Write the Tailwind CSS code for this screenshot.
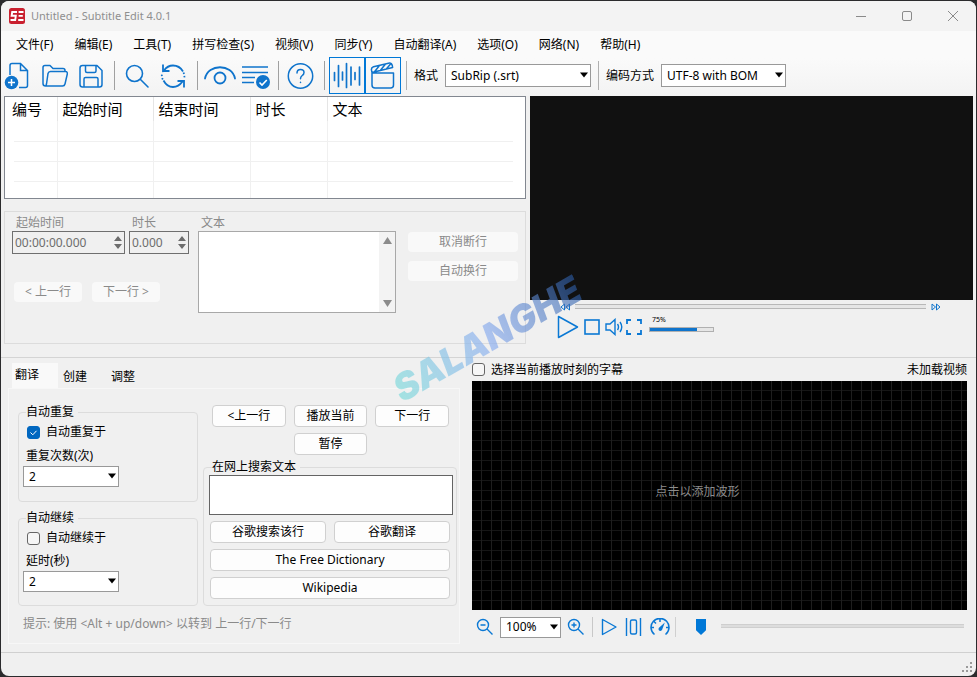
<!DOCTYPE html>
<html lang="zh-CN">
<head>
  <meta charset="UTF-8" />
  <meta name="viewport" content="width=device-width, initial-scale=1.0" />
  <title>Untitled - Subtitle Edit 4.0.1</title>
  <script src="https://cdn.jsdelivr.net/npm/@tailwindcss/browser@4"></script>
</head>
<body class="bg-[#2b2b2d] font-['Noto_Sans','Noto_Sans_CJK_SC',sans-serif] text-xs leading-4 text-black">
  <div class="min-h-screen p-px flex flex-col">
    <div class="relative flex-1 flex flex-col bg-[#f0f0f0] rounded-lg overflow-hidden">

      <!-- Title bar -->
      <header class="h-[30px] flex items-center bg-[#f3f3f3] pl-2 pb-px text-[#8f8f8f]">
        <svg class="w-4 h-4" viewBox="0 0 16 16" fill="none" stroke="#fff" stroke-width="1.9">
          <rect width="16" height="16" rx="2.5" fill="#c9202f" stroke="none" />
          <path d="M8 4H3.200L2.600 7.800H6.800L6.200 12H1.500M14.500 4H9.600M13.800 7.900H9.600M14.500 12H9.200" />
        </svg>
        <h1 class="ml-1.5 text-[11px]">Untitled - Subtitle Edit 4.0.1</h1>
        <div class="ml-auto flex">
          <button class="w-[46px] h-7 flex items-center justify-center" aria-label="最小化">
            <svg class="w-3 h-3" viewBox="0 0 12 12" fill="none" stroke="#8a8a8a"><path d="M1 6.5h10" /></svg>
          </button>
          <button class="w-[46px] h-7 flex items-center justify-center" aria-label="最大化">
            <svg class="w-3 h-3" viewBox="0 0 12 12" fill="none" stroke="#8a8a8a"><rect x="1.5" y="1.5" width="9" height="9" rx="1.5" /></svg>
          </button>
          <button class="w-[46px] h-7 flex items-center justify-center" aria-label="关闭">
            <svg class="w-3 h-3" viewBox="0 0 12 12" fill="none" stroke="#8a8a8a"><path d="M1 1l10 10M11 1L1 11" /></svg>
          </button>
        </div>
      </header>

      <!-- Menu -->
      <nav class="h-[27px] flex items-center gap-px bg-[#fafafa] pl-[5px]">
        <button class="px-[10px]">文件(F)</button>
        <button class="px-[10px]">编辑(E)</button>
        <button class="px-[10px]">工具(T)</button>
        <button class="px-[10px]">拼写检查(S)</button>
        <button class="px-[10px]">视频(V)</button>
        <button class="px-[10px]">同步(Y)</button>
        <button class="px-[10px]">自动翻译(A)</button>
        <button class="px-[10px]">选项(O)</button>
        <button class="px-[10px]">网络(N)</button>
        <button class="px-[10px]">帮助(H)</button>
      </nav>

      <!-- Toolbar -->
      <div class="h-[38px] flex items-center pb-[3px] bg-linear-to-b from-[#fafafa] to-[#f3f3f3]">
        <button class="w-9 h-9 flex items-center justify-center" aria-label="新建">
          <svg class="w-8 h-8" viewBox="0 0 32 32" fill="none" stroke="#0f74cc" stroke-width="1.5">
            <path d="M7 15V5.500Q7 3.500 9 3.500H17.500L24.500 10.500V25.500Q24.500 27.500 22.500 27.500H16M17.500 3.500V10.500H24.500" />
            <circle cx="8.500" cy="22.500" r="6.800" fill="#0f74cc" stroke="none" />
            <path d="M8.500 19v7M5 22.500h7" stroke="#fff" />
          </svg>
        </button>
        <button class="w-9 h-9 flex items-center justify-center" aria-label="打开">
          <svg class="w-7 h-7" viewBox="0 0 28 28" fill="none" stroke="#0f74cc" stroke-width="1.5" stroke-linejoin="round">
            <path d="M4.500 24Q2 24 2 21.500V5.500Q2 3.500 4 3.500H9L12 6.500H22Q24 6.500 24 8.500V9.500M4.500 24H21.500Q23.500 24 24 22L26.300 12Q26.600 9.500 24.500 9.500H9.500Q7.500 9.500 7 11.500L5.500 22Q5 24 4.500 24Z" />
          </svg>
        </button>
        <button class="w-9 h-9 flex items-center justify-center" aria-label="保存">
          <svg class="w-7 h-7" viewBox="0 0 28 28" fill="none" stroke="#0f74cc" stroke-width="1.5" stroke-linejoin="round">
            <path d="M5.500 3.500H20L25 8.500V22.500Q25 25 22.500 25H5.500Q3 25 3 22.500V6Q3 3.500 5.500 3.500ZM8.500 3.500V9Q8.500 10.500 10 10.500H17.500Q19 10.500 19 9V3.500M7 25V17Q7 15.500 8.500 15.500H19.500Q21 15.500 21 17V25" />
          </svg>
        </button>
        <span class="w-px h-[29px] bg-[#a0a0a0] mx-[5px]"></span>
        <button class="w-9 h-9 flex items-center justify-center" aria-label="查找">
          <svg class="w-7 h-7" viewBox="0 0 28 28" fill="none" stroke="#0f74cc" stroke-width="1.6" stroke-linecap="round">
            <circle cx="10.500" cy="11.500" r="8" /><path d="M16.500 17.500L24 25" />
          </svg>
        </button>
        <button class="w-9 h-9 flex items-center justify-center" aria-label="替换">
          <svg class="w-7 h-7" viewBox="0 0 28 28" fill="none" stroke="#0f74cc" stroke-width="1.8">
            <path d="M4 8.500Q7.500 3.500 13 3.500Q19.500 3.500 23 9.500M22.500 19.500Q18.500 25 13 25Q7 25 3.500 18.500" />
            <path d="M3 2.500V9H9.500M24 25.500V19H17.500" />
            <path d="M23.500 10.500Q25 14 24 17M2.800 17.500Q1 14 2.500 10.500" stroke-dasharray="1.500 2" />
          </svg>
        </button>
        <span class="w-px h-[29px] bg-[#a0a0a0] ml-[5px] mr-1"></span>
        <button class="w-9 h-9 flex items-center justify-center" aria-label="可视同步">
          <svg class="w-8 h-7" viewBox="0 0 32 28" fill="none" stroke="#0f74cc" stroke-width="1.8" stroke-linecap="round">
            <path d="M1 16.500C4 1.500 28 1.500 31 16.500" /><circle cx="16" cy="16" r="5.500" />
          </svg>
        </button>
        <button class="w-9 h-9 flex items-center justify-center" aria-label="拼写检查">
          <svg class="w-7 h-7" viewBox="0 0 28 28" fill="none" stroke="#0f74cc" stroke-width="1.6">
            <path d="M0 5H26M0 10.500H26M0 15.500H13M0 20.500H12" />
            <circle cx="21" cy="20" r="7" fill="#0f74cc" stroke="none" />
            <path d="M17.500 20.500l2.500 2.500 4.800-5" stroke="#fff" />
          </svg>
        </button>
        <span class="w-px h-[29px] bg-[#a0a0a0] mx-1"></span>
        <button class="w-9 h-9 flex items-center justify-center" aria-label="帮助">
          <svg class="w-7 h-7" viewBox="0 0 28 28" fill="none" stroke="#0f74cc" stroke-width="1.5" stroke-linecap="round">
            <circle cx="13.500" cy="14" r="12.200" />
            <path d="M10 11Q10 7.500 13.500 7.500Q17 7.500 17 10.500Q17 12.300 15.200 13.500Q13.500 14.800 13.500 16.800M13.500 20.300v.2" />
          </svg>
        </button>
        <span class="w-px h-[29px] bg-[#a0a0a0] ml-[5px] mr-1"></span>
        <button class="w-9 h-[37px] border border-[#0078d7] flex items-center justify-center" aria-label="显示波形" aria-pressed="true">
          <svg class="w-7 h-7" viewBox="0 0 28 28" fill="none" stroke="#0f74cc" stroke-width="1.7" stroke-linecap="round">
            <path d="M1.500 10.500v8M5.500 3.500v21M9.500 10v8M13.500 1.500v24M18 5v18M22 10.500v7M26.500 5v18" />
          </svg>
        </button>
        <button class="w-9 h-[37px] border border-[#0078d7] flex items-center justify-center" aria-label="显示视频" aria-pressed="true">
          <svg class="w-7 h-7" viewBox="0 0 28 28" fill="none" stroke="#0f74cc" stroke-width="1.5" stroke-linejoin="round">
            <path d="M3 11H24.500V23Q24.500 26 21.500 26H6Q3 26 3 23ZM2.500 8.200Q2 5.500 4.500 4.800L19.500 1.200Q22.500.6 23.300 3.500L23.600 5.400L3 10.500ZM5.500 9.800L10.500 3.500M11.500 8.300L16.500 2M17.500 6.800L22 1.500" />
          </svg>
        </button>
        <span class="w-px h-[29px] bg-[#b0b0b0] mx-[5px]"></span>
        <label for="format" class="ml-0.5 whitespace-nowrap">格式</label>
        <div class="relative ml-[7px] w-[146px]">
          <select id="format" class="appearance-none block w-full h-[23px] bg-white border border-[#999] pl-[5px] pr-4"><option>SubRip (.srt)</option></select>
          <svg class="absolute right-[3px] top-2 w-2 h-[6px] pointer-events-none" viewBox="0 0 8 6"><path d="M0 .5H8L4 5.500Z" /></svg>
        </div>
        <span class="w-px h-[29px] bg-[#b0b0b0] mx-[7px]"></span>
        <label for="encoding" class="whitespace-nowrap">编码方式</label>
        <div class="relative ml-[7px] w-[125px]">
          <select id="encoding" class="appearance-none block w-full h-[23px] bg-white border border-[#999] pl-[5px] pr-4"><option>UTF-8 with BOM</option></select>
          <svg class="absolute right-[3px] top-2 w-2 h-[6px] pointer-events-none" viewBox="0 0 8 6"><path d="M0 .5H8L4 5.500Z" /></svg>
        </div>
      </div>

      <!-- Subtitle list + video -->
      <section class="grid grid-cols-[522fr_443fr] gap-1 px-[3px] pb-[13px] border-b border-[#d4d4d4]">
        <div class="min-w-0">
          <div class="h-[103px] bg-white border border-[#828790] pl-[9px] pr-3 overflow-hidden">
            <table class="w-full table-fixed border-collapse text-[15px] leading-5">
              <colgroup>
                <col class="w-[43px]" /><col class="w-[96px]" /><col class="w-[97px]" /><col class="w-[77px]" /><col />
              </colgroup>
              <thead>
                <tr class="h-6 text-left">
                  <th class="font-normal p-0 border-r border-[#e5e5e5] whitespace-nowrap"><span class="relative -left-0.5">编号</span></th>
                  <th class="font-normal p-0 pl-[5px] border-r border-[#e5e5e5]">起始时间</th>
                  <th class="font-normal p-0 pl-[5px] border-r border-[#e5e5e5]">结束时间</th>
                  <th class="font-normal p-0 pl-[5px] border-r border-[#e5e5e5]">时长</th>
                  <th class="font-normal p-0 pl-[5px]">文本</th>
                </tr>
              </thead>
              <tbody class="[&_td]:border-r [&_td]:border-b [&_td]:border-[#f0f0f0] [&_td:last-child]:border-r-0">
                <tr class="h-5"><td></td><td></td><td></td><td></td><td></td></tr>
                <tr class="h-5"><td></td><td></td><td></td><td></td><td></td></tr>
                <tr class="h-5"><td></td><td></td><td></td><td></td><td></td></tr>
                <tr class="h-5"><td></td><td></td><td></td><td></td><td></td></tr>
              </tbody>
            </table>
          </div>

          <!-- Line editor -->
          <div class="mt-3 h-[133px] border border-[#dcdcdc] px-[7px] pt-[3px] flex text-[#8a8a8a]">
            <div>
              <div class="flex gap-1">
                <div>
                  <label for="start" class="block pl-1">起始时间</label>
                  <div class="relative w-[113px]">
                    <input id="start" type="text" value="00:00:00.000" disabled class="block w-full h-[23px] border border-[#6f6f6f] pl-0.5 text-[#6d6d6d]" />
                    <svg class="absolute right-[3px] top-[5px] w-2 h-[13px]" viewBox="0 0 8 13" fill="#6d6d6d"><path d="M0 5L4 0L8 5ZM0 8H8L4 13Z" /></svg>
                  </div>
                </div>
                <div>
                  <label for="duration" class="block pl-[3px]">时长</label>
                  <div class="relative w-[60px]">
                    <input id="duration" type="text" value="0.000" disabled class="block w-full h-[23px] border border-[#6f6f6f] pl-0.5 text-[#6d6d6d]" />
                    <svg class="absolute right-[3px] top-[5px] w-2 h-[13px]" viewBox="0 0 8 13" fill="#6d6d6d"><path d="M0 5L4 0L8 5ZM0 8H8L4 13Z" /></svg>
                  </div>
                </div>
              </div>
              <div class="mt-7 ml-0.5 flex gap-[10px]">
                <button disabled class="w-[68px] h-5 bg-[#f9f9f9] rounded">&lt; 上一行</button>
                <button disabled class="w-[68px] h-5 bg-[#f9f9f9] rounded">下一行 &gt;</button>
              </div>
            </div>
            <div class="ml-[9px] flex-1 min-w-0">
              <label for="text" class="block pl-[3px]">文本</label>
              <div class="flex h-[82px] bg-white border border-[#a8a8a8]">
                <textarea id="text" disabled class="flex-1 min-w-0 resize-none"></textarea>
                <div class="w-4 bg-[#f3f3f3] flex flex-col items-center justify-between py-[5px]">
                  <svg class="w-[9px] h-[7px]" viewBox="0 0 9 7" fill="#8b8b8b"><path d="M0 7L4.500 0L9 7Z" /></svg>
                  <svg class="w-[9px] h-[7px]" viewBox="0 0 9 7" fill="#8b8b8b"><path d="M0 0H9L4.500 7Z" /></svg>
                </div>
              </div>
            </div>
            <div class="ml-3 pt-[17px] w-[110px] flex flex-col gap-[9px]">
              <button disabled class="h-5 bg-[#f9f9f9] rounded">取消断行</button>
              <button disabled class="h-5 bg-[#f9f9f9] rounded">自动换行</button>
            </div>
          </div>
        </div>

        <div class="min-w-0">
          <div class="h-[204px] bg-[#111]"></div>
          <div class="h-[13px] flex items-center pl-[30px] pr-[32px]">
            <svg class="w-[10px] h-2" viewBox="0 0 10 8" fill="none" stroke="#0f74cc"><path d="M4.500 1V7L1 4ZM9.500 1V7L6 4Z" /></svg>
            <input type="range" value="0" aria-label="播放位置" class="appearance-none flex-1 min-w-0 mx-[5px] h-[5px] bg-[#e6e6e6] border-y border-[#b8b8b8] [&::-webkit-slider-thumb]:appearance-none [&::-webkit-slider-thumb]:w-0" />
            <svg class="w-[10px] h-2" viewBox="0 0 10 8" fill="none" stroke="#0f74cc"><path d="M1 1V7L4.500 4ZM5.500 1V7L9 4Z" /></svg>
          </div>
          <div class="h-7 flex items-center pl-[27px]">
            <button aria-label="播放">
              <svg class="w-[22px] h-6 block" viewBox="0 0 22 24" fill="none" stroke="#0a78d4" stroke-width="1.5" stroke-linejoin="round"><path d="M1.500 1.500L20.500 12L1.500 22.500Z" /></svg>
            </button>
            <button aria-label="停止" class="ml-[5px]">
              <svg class="w-4 h-4 block" viewBox="0 0 16 16" fill="none" stroke="#0a78d4" stroke-width="1.6"><rect x="1" y="1" width="14" height="14" /></svg>
            </button>
            <button aria-label="静音" class="ml-[5px]">
              <svg class="w-[18px] h-[18px] block" viewBox="0 0 18 18" fill="none" stroke="#0a78d4" stroke-width="1.4"><path d="M1 6H5L10 1.500V16.500L5 12H1ZM12.500 6Q14.500 9 12.500 12M15 4Q18.500 9 15 14" /></svg>
            </button>
            <button aria-label="全屏" class="ml-[3px]">
              <svg class="w-4 h-4 block" viewBox="0 0 16 16" fill="none" stroke="#0a78d4" stroke-width="1.8"><path d="M1 5V1H5M11 1H15V5M15 11V15H11M5 15H1V11" /></svg>
            </button>
            <div class="ml-[7px] w-[65px] h-[22px]">
              <label for="volume" class="block pl-[3px] text-[7px] leading-[8px]">75%</label>
              <input id="volume" type="range" value="75" class="appearance-none block w-full h-[5px] mt-[3px] border border-[#b0b0b0] bg-linear-to-r from-[#0f74cc] from-75% to-[#e6e6e6] to-75% [&::-webkit-slider-thumb]:appearance-none [&::-webkit-slider-thumb]:w-0" />
            </div>
          </div>
        </div>
      </section>

      <!-- Translate tabs + waveform -->
      <section class="flex-1 grid grid-cols-[468fr_495fr] pl-[3px] pr-[9px]">
        <div class="min-w-0 pt-[5px] flex flex-col">
          <div class="flex pl-2 h-[25px]" role="tablist">
            <button role="tab" aria-selected="true" class="w-[46px] bg-[#f9f9f9] pl-[3px] pb-px text-left">翻译</button>
            <button role="tab" class="w-12 pl-[5px] pt-[3px] text-left">创建</button>
            <button role="tab" class="w-12 pl-[5px] pt-[3px] text-left">调整</button>
          </div>
          <div class="flex-1 ml-1 mr-3 border border-[#f7f7f7] pl-[9px] pr-[2px] pt-[15px]">
            <div class="flex gap-[5px]">
              <div class="w-[180px] flex flex-col gap-2">
                <fieldset class="h-[98px] border border-[#dcdcdc] rounded-sm pl-1">
                  <legend class="ml-[3px] pr-1">自动重复</legend>
                  <label class="flex items-center gap-1.5 ml-1 mt-1">
                    <span class="relative w-[13px] h-[13px]">
                      <input type="checkbox" checked class="appearance-none block w-[13px] h-[13px] rounded-[3px] border border-[#666] bg-white checked:bg-[#0067c0] checked:border-[#0067c0]" />
                      <svg class="absolute inset-0 pointer-events-none" viewBox="0 0 13 13" fill="none" stroke="#fff"><path d="M3.500 6.500L5.800 8.800L9.500 4.800" /></svg>
                    </span>
                    自动重复于
                  </label>
                  <label for="repeat" class="block mt-2 ml-[3px]">重复次数(次)</label>
                  <div class="relative w-24 mt-0.5">
                    <select id="repeat" class="appearance-none block w-full h-[21px] bg-white border border-[#999] pl-[5px]"><option>2</option></select>
                    <svg class="absolute right-[3px] top-[7px] w-2 h-[6px] pointer-events-none" viewBox="0 0 8 6"><path d="M0 .5H8L4 5.500Z" /></svg>
                  </div>
                </fieldset>
                <fieldset class="h-[96px] border border-[#dcdcdc] rounded-sm pl-1">
                  <legend class="ml-[3px] pr-1">自动继续</legend>
                  <label class="flex items-center gap-1.5 ml-1 mt-1">
                    <input type="checkbox" class="appearance-none w-[13px] h-[13px] rounded-[3px] border border-[#666] bg-[#f6f6f6]" />
                    自动继续于
                  </label>
                  <label for="delay" class="block mt-[7px] ml-[3px]">延时(秒)</label>
                  <div class="relative w-24 mt-0.5">
                    <select id="delay" class="appearance-none block w-full h-[21px] bg-white border border-[#999] pl-[5px]"><option>2</option></select>
                    <svg class="absolute right-[3px] top-[7px] w-2 h-[6px] pointer-events-none" viewBox="0 0 8 6"><path d="M0 .5H8L4 5.500Z" /></svg>
                  </div>
                </fieldset>
              </div>
              <div class="flex-1 min-w-0 pt-px">
                <div class="grid grid-cols-3 gap-x-2 gap-y-[6px] pl-[9px] pr-[8px]">
                  <button class="h-[22px] bg-[#fdfdfd] border border-[#d0d0d0] rounded">&lt;上一行</button>
                  <button class="h-[22px] bg-[#fdfdfd] border border-[#d0d0d0] rounded">播放当前</button>
                  <button class="h-[22px] bg-[#fdfdfd] border border-[#d0d0d0] rounded">下一行</button>
                  <button class="h-[22px] bg-[#fdfdfd] border border-[#d0d0d0] rounded col-start-2">暂停</button>
                </div>
                <fieldset class="mt-1 h-[147px] border border-[#dcdcdc] rounded-sm px-1">
                  <legend class="ml-1 pr-1"><label for="search">在网上搜索文本</label></legend>
                  <textarea id="search" class="block ml-px w-full h-10 bg-white border border-[#646464] resize-none"></textarea>
                  <div class="grid grid-cols-2 gap-x-2 gap-y-[6px] mt-[6px] px-0.5">
                    <button class="h-[22px] bg-[#fdfdfd] border border-[#d0d0d0] rounded">谷歌搜索该行</button>
                    <button class="h-[22px] bg-[#fdfdfd] border border-[#d0d0d0] rounded">谷歌翻译</button>
                    <button class="h-[22px] bg-[#fdfdfd] border border-[#d0d0d0] rounded col-span-2">The Free Dictionary</button>
                    <button class="h-[22px] bg-[#fdfdfd] border border-[#d0d0d0] rounded col-span-2">Wikipedia</button>
                  </div>
                </fieldset>
              </div>
            </div>
            <p class="mt-[10px] ml-[5px] text-[#8a8a8a]">提示: 使用 &lt;Alt + up/down&gt; 以转到 上一行/下一行</p>
          </div>
        </div>

        <div class="min-w-0 flex flex-col">
          <div class="h-[23px] flex items-center justify-between">
            <label class="flex items-center gap-1.5">
              <input type="checkbox" class="appearance-none w-[13px] h-[13px] rounded-[3px] border border-[#666] bg-[#f6f6f6]" />
              选择当前播放时刻的字幕
            </label>
            <span>未加载视频</span>
          </div>
          <div class="h-[229px] flex items-center justify-center pr-11 pb-2 text-[#8c8c8c] bg-black bg-[linear-gradient(to_left,#1e1e1e_1px,transparent_1px),linear-gradient(to_top,#161616_1px,transparent_1px)] bg-[size:10px_10px]">点击以添加波形</div>
          <div class="h-[34px] flex items-center pl-1">
            <button aria-label="缩小">
              <svg class="w-[18px] h-[18px] block" viewBox="0 0 18 18" fill="none" stroke="#0a78d4" stroke-width="1.4"><circle cx="7" cy="7" r="5.500" /><path d="M11 11L16.500 16.500M4.500 7H9.500" /></svg>
            </button>
            <div class="relative ml-1.5 w-[61px]">
              <select aria-label="缩放" class="appearance-none block w-full h-[21px] bg-white border border-[#999] pl-[5px]"><option>100%</option></select>
              <svg class="absolute right-[3px] top-[7px] w-2 h-[6px] pointer-events-none" viewBox="0 0 8 6"><path d="M0 .5H8L4 5.500Z" /></svg>
            </div>
            <button aria-label="放大" class="ml-1.5">
              <svg class="w-[18px] h-[18px] block" viewBox="0 0 18 18" fill="none" stroke="#0a78d4" stroke-width="1.4"><circle cx="7" cy="7" r="5.500" /><path d="M11 11L16.500 16.500M4.500 7H9.500M7 4.500V9.500" /></svg>
            </button>
            <span class="w-px h-5 bg-[#c8c8c8] ml-[7px] mr-2"></span>
            <button aria-label="播放">
              <svg class="w-4 h-[18px] block" viewBox="0 0 16 18" fill="none" stroke="#0a78d4" stroke-width="1.4" stroke-linejoin="round"><path d="M1.500 1.500L15 9L1.500 16.500Z" /></svg>
            </button>
            <button aria-label="居中" class="ml-2">
              <svg class="w-[17px] h-[18px] block" viewBox="0 0 17 18" fill="none" stroke="#0a78d4" stroke-width="1.4"><path d="M1.500 0V18M15.500 0V18" /><rect x="5.500" y="2" width="6" height="14" rx="1.500" /></svg>
            </button>
            <button aria-label="播放速度" class="ml-2">
              <svg class="w-5 h-[18px] block" viewBox="0 0 20 18" fill="none" stroke="#0a78d4" stroke-width="1.5"><path d="M4.500 16.500A9 9 0 1 1 15.500 16.500M10 1V4M1 9.500H4M16 9.500H19M4 3.500L6 5.500" /><path d="M14.800 4.500L12 12Q10.500 13.500 9 12.500Q7.800 11 9 9.800Z" fill="#0a78d4" stroke="none" /></svg>
            </button>
            <span class="w-px h-5 bg-[#d0d0d0] ml-[5px]"></span>
            <input type="range" value="0" aria-label="波形位置" class="appearance-none flex-1 min-w-0 ml-5 mr-[3px] h-5 bg-[linear-gradient(#c8c8c8,#e4e4e4_2px,#c8c8c8)] bg-[size:calc(100%-25px)_4px] bg-[position:right_7px] bg-no-repeat [&::-webkit-slider-thumb]:appearance-none [&::-webkit-slider-thumb]:w-[10px] [&::-webkit-slider-thumb]:h-4 [&::-webkit-slider-thumb]:bg-[#0078d7] [&::-webkit-slider-thumb]:[clip-path:polygon(0_0,100%_0,100%_70%,50%_100%,0_70%)]" />
          </div>
        </div>
      </section>

      <!-- Status bar -->
      <footer class="h-6 mt-2 border-t border-[#d0d0d0] flex items-end justify-end p-[3px]">
        <svg class="w-[11px] h-[11px]" viewBox="0 0 11 11" fill="#9a9a9a"><path d="M8 0h2v2h-2zM8 4h2v2h-2zM4 4h2v2h-2zM8 8h2v2h-2zM4 8h2v2h-2zM0 8h2v2h-2z" /></svg>
      </footer>

      <!-- Watermark -->
      <div class="absolute left-[381px] top-[318px] -rotate-[30deg] pointer-events-none font-['Inter'] font-black italic text-[37px] leading-10 text-transparent bg-clip-text bg-linear-to-r from-[#6fd8d8]/60 via-[#8fb0ee]/70 to-[#2c5da8]/60">SALANGHE</div>
    </div>
  </div>
</body>
</html>
